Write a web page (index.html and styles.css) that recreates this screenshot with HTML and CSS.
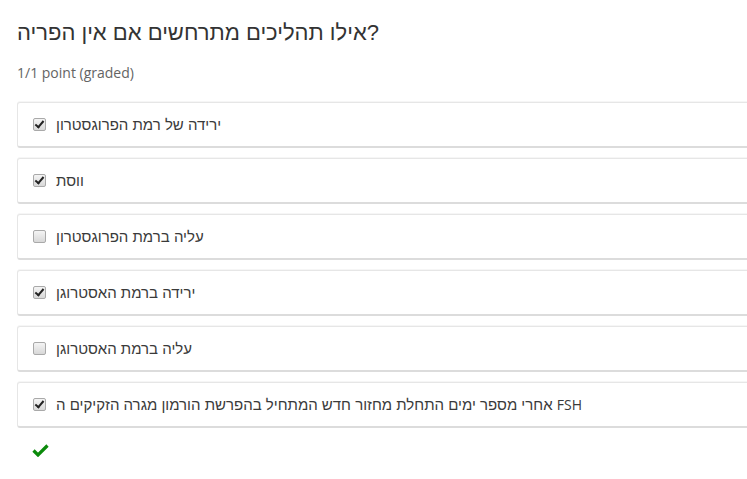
FILE: index.html
```html
<!DOCTYPE html>
<html lang="he">
<head>
<meta charset="utf-8">
<link rel="stylesheet" href="styles.css">
</head>
<body>
<div class="problem">
  <h2 class="title">אילו תהליכים מתרחשים אם אין הפריה?</h2>
  <div class="meta">1/1 point (graded)</div>
  <div class="options">
    <div class="option"><span class="cb checked"></span><span class="label">ירידה של רמת הפרוגסטרון</span></div>
    <div class="option"><span class="cb checked"></span><span class="label">ווסת</span></div>
    <div class="option"><span class="cb"></span><span class="label">עליה ברמת הפרוגסטרון</span></div>
    <div class="option"><span class="cb checked"></span><span class="label">ירידה ברמת האסטרוגן</span></div>
    <div class="option"><span class="cb"></span><span class="label">עליה ברמת האסטרוגן</span></div>
    <div class="option"><span class="cb checked"></span><span class="label">אחרי מספר ימים התחלת מחזור חדש המתחיל בהפרשת הורמון מגרה הזקיקים ה <span class="latin">FSH</span></span></div>
  </div>
  <div class="status">
    <svg width="17" height="14" viewBox="0 0 17 14"><path d="M1.5 7.5 L6 12 L15.5 2.5" fill="none" stroke="#0b8a0b" stroke-width="3.2" stroke-linejoin="miter"/></svg>
  </div>
</div>
</body>
</html>
```

FILE: styles.css
```css
html, body {
  margin: 0;
  padding: 0;
  background: #fff;
  overflow: hidden;
}
body {
  font-family: "Open Sans", "Noto Sans", "DejaVu Sans", sans-serif;
  color: #313131;
}
.problem {
  padding: 18px 0 0 17px;
}
.title {
  margin: 0;
  font-family: "Liberation Sans", "Open Sans", sans-serif;
  font-size: 22px;
  font-weight: 400;
  line-height: 30px;
  color: #333;
}
.meta {
  margin-top: 15px;
  font-size: 14px;
  line-height: 20px;
  color: #646464;
}
.options {
  margin-top: 19px;
  width: 760px;
  display: flex;
  flex-direction: column;
  gap: 10px;
}
.option {
  height: 43px;
  box-sizing: content-box;
  border: 1px solid #e6e6e6;
  border-bottom: 2px solid #dcdcdc;
  border-radius: 3px;
  box-shadow: 0 -1px 0 #f6f6f6;
  display: flex;
  align-items: center;
  padding-left: 15px;
  background: #fff;
}
.cb {
  width: 11px;
  height: 11px;
  border: 1px solid #a9a9a9;
  border-radius: 2px;
  background: linear-gradient(#f4f4f4, #d8d8d8);
  position: relative;
  margin-right: 10px;
  flex: none;
}
.cb.checked::after {
  content: "";
  position: absolute;
  left: 3px;
  top: 0px;
  width: 3px;
  height: 7px;
  border: solid #222;
  border-width: 0 2px 2px 0;
  transform: rotate(40deg);
}
.label {
  font-family: "Liberation Sans", "Open Sans", sans-serif;
  font-size: 15px;
  line-height: 20px;
  color: #3a3a3a;
}
.latin {
  font-family: "Open Sans", sans-serif;
  font-size: 14px;
}
.status {
  margin-top: 12px;
  padding-left: 15px;
  height: 20px;
}
```
